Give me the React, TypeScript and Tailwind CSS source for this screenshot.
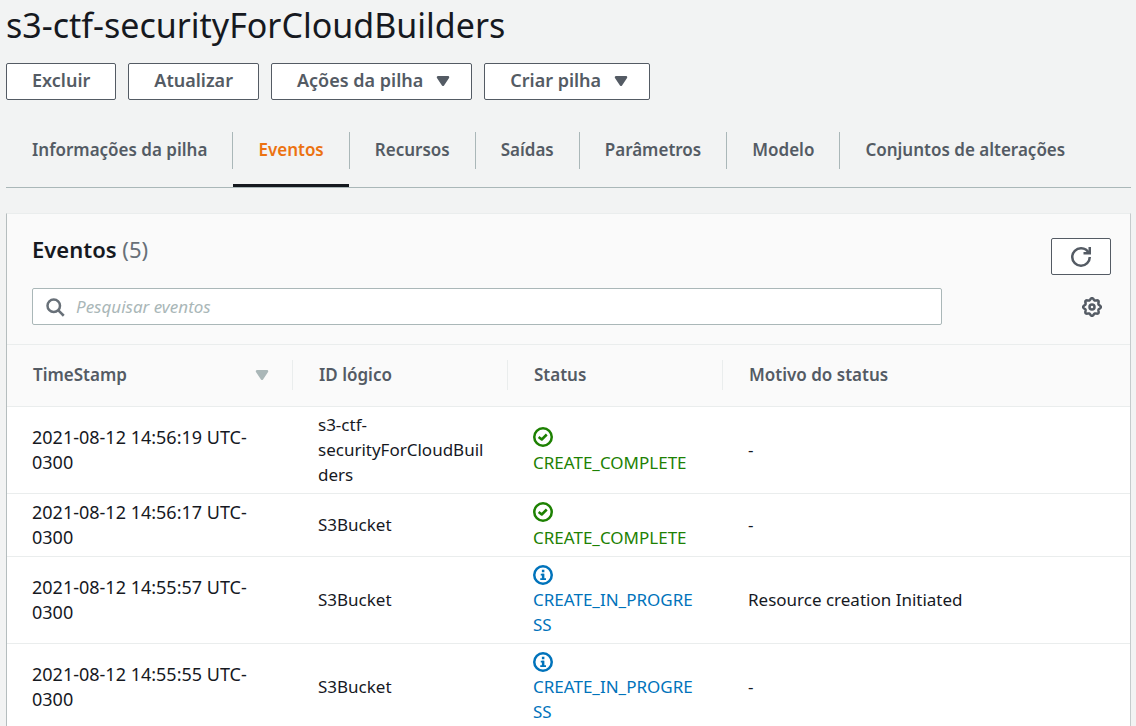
import React from "react";

type EventStatus = "CREATE_COMPLETE" | "CREATE_IN_PROGRESS";

interface StackEvent {
  timestamp: string;
  logicalId: string;
  status: EventStatus;
  reason: string;
}

const events: StackEvent[] = [
  { timestamp: "2021-08-12 14:56:19 UTC-0300", logicalId: "s3-ctf-securityForCloudBuilders", status: "CREATE_COMPLETE", reason: "-" },
  { timestamp: "2021-08-12 14:56:17 UTC-0300", logicalId: "S3Bucket", status: "CREATE_COMPLETE", reason: "-" },
  { timestamp: "2021-08-12 14:55:57 UTC-0300", logicalId: "S3Bucket", status: "CREATE_IN_PROGRESS", reason: "Resource creation Initiated" },
  { timestamp: "2021-08-12 14:55:55 UTC-0300", logicalId: "S3Bucket", status: "CREATE_IN_PROGRESS", reason: "-" },
];

const tabs = ["Informações da pilha", "Eventos", "Recursos", "Saídas", "Parâmetros", "Modelo", "Conjuntos de alterações"];

// Outline of an eight-toothed cog, sampled around its centre.
const cogPoints = Array.from({ length: 96 }, (_, i) => {
  const angle = (i / 96) * Math.PI * 2;
  const radius = 6.35 + 0.75 * Math.cos(8 * angle);
  return `${(8 + radius * Math.cos(angle)).toFixed(2)},${(8 + radius * Math.sin(angle)).toFixed(2)}`;
}).join(" ");

function Caret({ className = "" }: { className?: string }) {
  return (
    <svg viewBox="0 0 16 16" className={`size-5 shrink-0 ${className}`} aria-hidden="true">
      <path d="M4 5h8l-4 6-4-6z" fill="currentColor" stroke="currentColor" strokeWidth="2" strokeLinejoin="round" />
    </svg>
  );
}

function ActionButton({ children, menu = false }: { children: React.ReactNode; menu?: boolean }) {
  return (
    <button
      type="button"
      className={`flex h-[37px] items-center gap-[10px] rounded-xs border border-[#545b64] bg-white pb-0.5 pl-[25px] text-[18px] leading-[25px] font-semibold whitespace-nowrap text-[#545b64] ${menu ? "pr-[18px]" : "pr-[25px]"}`}
    >
      {children}
      {menu && <Caret />}
    </button>
  );
}

function StatusIcon({ status }: { status: EventStatus }) {
  return (
    <svg viewBox="0 0 16 16" className="size-5" fill="none" stroke="currentColor" strokeWidth="2" aria-hidden="true">
      <circle cx="8" cy="8" r="7" />
      {status === "CREATE_COMPLETE" ? (
        <path d="M4.5 8l2.5 2 4-4" strokeLinejoin="round" />
      ) : (
        <>
          <path d="M5.800 11.300h4.600M6.200 7.600h2.500" strokeWidth="1.400" />
          <path d="M8.100 7v4.500M7.100 4.800h2" />
        </>
      )}
    </svg>
  );
}

export default function App() {
  return (
    <div className="min-h-screen bg-[#f2f3f3] pr-[5px] pl-[6px] font-['Noto_Sans',sans-serif] text-[17px] leading-[25px] text-[#16191f]">
      <h1 className="pt-1 text-[34px] leading-[42px]">s3-ctf-securityForCloudBuilders</h1>

      <div className="mt-[17px] flex flex-wrap gap-x-[12px]">
        <ActionButton>Excluir</ActionButton>
        <ActionButton>Atualizar</ActionButton>
        <ActionButton menu>Ações da pilha</ActionButton>
        <ActionButton menu>Criar pilha</ActionButton>
      </div>

      <nav className="mt-8 flex border-b border-[#aab7b8] pl-px">
        {tabs.map((tab, i) => (
          <a
            key={tab}
            href="#"
            aria-current={tab === "Eventos" ? "page" : undefined}
            className={`flex flex-col font-semibold whitespace-nowrap ${tab === "Eventos" ? "text-[#ec7211]" : "text-[#545b64]"}`}
          >
            <span className={`flex h-[37px] items-center px-[25px] pb-0.5 ${i < tabs.length - 1 ? "border-r border-[#aab7b8]" : ""}`}>{tab}</span>
            <span className={`mt-[15px] mr-px h-[3px] ${tab === "Eventos" ? "bg-[#16191f]" : ""}`} />
          </a>
        ))}
      </nav>

      <section className="mt-[25px] border border-t-[#eaeded] border-r-[#c5cbcc] border-b-[#c5cbcc] border-l-[#b5bdbe] bg-white">
        <div className="bg-[#fafafa] pt-6 pb-[19px]">
          <div className="flex items-start justify-between pr-[19px] pl-[25px]">
            <h2 className="text-[22px] leading-[23px] font-semibold">
              Eventos <span className="font-normal text-[#687078]">(5)</span>
            </h2>
            <button
              type="button"
              aria-label="Atualizar eventos"
              className="flex h-[37px] w-[60px] items-center justify-center rounded-xs border border-[#545b64] bg-white text-[#545b64]"
            >
              <svg viewBox="0 0 16 16" className="size-5" fill="none" stroke="currentColor" strokeWidth="2" aria-hidden="true">
                <path d="M10 5h5V0" />
                <path d="M15 8a6.957 6.957 0 0 1-7 7 6.957 6.957 0 0 1-7-7 6.957 6.957 0 0 1 7-7 6.870 6.870 0 0 1 6.300 4" />
              </svg>
            </button>
          </div>
          <div className="mt-[13px] flex items-center pr-7 pl-[25px]">
            <label className="flex h-[37px] flex-1 items-center rounded-xs border border-[#aab7b8] bg-white pl-3">
              <svg viewBox="0 0 16 16" className="size-5 shrink-0 text-[#687078]" fill="none" stroke="currentColor" strokeWidth="2" aria-hidden="true">
                <circle cx="7" cy="7" r="5" />
                <path d="M15 15l-4.500-4.500" />
              </svg>
              <input
                type="text"
                aria-label="Pesquisar eventos"
                placeholder="Pesquisar eventos"
                className="ml-[11px] min-w-0 flex-1 bg-transparent outline-none placeholder:text-[#aab7b8] placeholder:italic"
              />
            </label>
            <button type="button" aria-label="Preferências" className="ml-[140px] text-[#545b64]">
              <svg viewBox="0 0 16 16" className="size-5" fill="none" stroke="currentColor" strokeWidth="2" strokeLinejoin="round" aria-hidden="true">
                <polygon points={cogPoints} />
                <circle cx="8" cy="8" r="2" />
              </svg>
            </button>
          </div>
        </div>

        <table className="w-full table-fixed border-collapse text-left">
          <thead>
            <tr className="h-[62px] border-y border-[#eaeded] bg-[#fafafa] text-[#545b64]">
              <th className="w-[286px] p-0 pb-0.5 font-semibold">
                <div className="flex h-[30px] items-center justify-between border-r border-[#eaeded] pr-5 pl-[26px]">
                  TimeStamp
                  <Caret className="text-[#aab7b8]" />
                </div>
              </th>
              <th className="w-[215px] p-0 pb-0.5 font-semibold">
                <div className="flex h-[30px] items-center border-r border-[#eaeded] pl-[26px]">ID lógico</div>
              </th>
              <th className="w-[215px] p-0 pb-0.5 font-semibold">
                <div className="flex h-[30px] items-center border-r border-[#eaeded] pl-[26px]">Status</div>
              </th>
              <th className="p-0 pb-0.5 font-semibold">
                <div className="flex h-[30px] items-center pl-[26px]">Motivo do status</div>
              </th>
            </tr>
          </thead>
          <tbody>
            {events.map((event) => (
              <tr key={event.timestamp} className="h-[63px] border-b border-[#eaeded]">
                <td className="pt-[5px] pr-[22px] pb-[6px] pl-[25px] text-[18px] leading-[25px]">{event.timestamp}</td>
                <td className="pt-[5px] pr-[22px] pb-[6px] pl-[25px] wrap-break-word">{event.logicalId}</td>
                <td className={`pt-[5px] pr-[22px] pb-[6px] pl-[25px] wrap-break-word ${event.status === "CREATE_COMPLETE" ? "text-[#1d8102]" : "text-[#0073bb]"}`}>
                  <div className="flex h-[25px] items-center">
                    <StatusIcon status={event.status} />
                  </div>
                  {event.status}
                </td>
                <td className="pt-[5px] pr-[22px] pb-[6px] pl-[25px]">{event.reason}</td>
              </tr>
            ))}
          </tbody>
        </table>
      </section>
    </div>
  );
}
